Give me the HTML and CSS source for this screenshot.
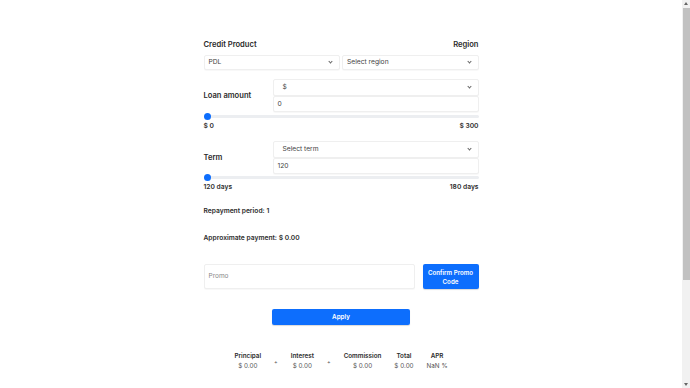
FILE: index.html
```html
<!DOCTYPE html>
<html lang="en">
<head>
    <meta charset="UTF-8">
    <meta name="viewport" content="width=device-width, initial-scale=1.0">
    <title>Loan calculator</title>
    <link rel="stylesheet" href="styles.css">
</head>
<body>
    <div class="calc">
        <div class="head-row">
            <span class="label">Credit Product</span>
            <span class="label">Region</span>
        </div>
        <div class="select-row">
            <div class="select">PDL<span class="caret"></span></div>
            <div class="select">Select region<span class="caret"></span></div>
        </div>

        <div class="field">
            <span class="label">Loan amount</span>
            <div class="field-inputs">
                <div class="select tall">$<span class="caret"></span></div>
                <div class="input">0</div>
            </div>
        </div>
        <div class="range"><span class="thumb"></span></div>
        <div class="range-labels">
            <span>$ 0</span>
            <span>$ 300</span>
        </div>

        <div class="field term">
            <span class="label">Term</span>
            <div class="field-inputs">
                <div class="select tall">Select term<span class="caret"></span></div>
                <div class="input">120</div>
            </div>
        </div>
        <div class="range term-range"><span class="thumb"></span></div>
        <div class="range-labels">
            <span>120 days</span>
            <span>180 days</span>
        </div>

        <p class="info">Repayment period: 1</p>
        <p class="info second">Approximate payment: $ 0.00</p>

        <div class="promo-row">
            <div class="promo">Promo</div>
            <button class="btn btn-promo">Confirm Promo<br>Code</button>
        </div>

        <div class="apply-row">
            <button class="btn btn-apply">Apply</button>
        </div>

        <div class="summary">
            <div class="sum-item"><b>Principal</b><span>$ 0.00</span></div>
            <div class="plus">+</div>
            <div class="sum-item"><b>Interest</b><span>$ 0.00</span></div>
            <div class="plus">+</div>
            <div class="sum-item"><b>Commission</b><span>$ 0.00</span></div>
            <div class="sum-item"><b>Total</b><span>$ 0.00</span></div>
            <div class="sum-item"><b>APR</b><span>NaN %</span></div>
        </div>
    </div>

    <!-- page scrollbar as it looks in the screenshot -->
    <div class="scrollbar">
        <span class="sb-arrow up"></span>
        <span class="sb-thumb"></span>
        <span class="sb-arrow down"></span>
    </div>
</body>
</html>
```

FILE: styles.css
```css
body {
    margin: 0;
    padding: 0 8px 0 0;
    font-family: Inter, "Noto Sans", sans-serif;
    color: #212529;
    background: #fff;
}

.scrollbar {
    position: fixed;
    top: 0;
    right: 0;
    width: 8px;
    height: 100vh;
    background: #f1f1f1;
    display: flex;
    flex-direction: column;
    align-items: center;
}

.sb-thumb {
    width: 7px;
    height: 272px;
    margin-left: 1px;
    background: #c1c1c1;
}

.sb-arrow {
    width: 0;
    height: 0;
    margin: 2px 0 3px;
    border-left: 2px solid transparent;
    border-right: 2px solid transparent;
}

.sb-arrow.up {
    border-bottom: 3px solid #666;
}

.sb-arrow.down {
    margin-top: auto;
    margin-bottom: 2px;
    border-top: 3px solid #666;
}

.calc {
    width: 275px;
    margin: 0 auto;
    padding: 40px 0 182px;
}

.label {
    font-size: 7.6px;
    font-weight: 600;
    color: #2b2b2b;
}

.head-row {
    display: flex;
    justify-content: space-between;
    height: 10px;
    line-height: 10px;
}

.select-row {
    display: flex;
    gap: 2px;
    margin-top: 5px;
}

.select,
.input,
.promo {
    box-sizing: border-box;
    position: relative;
    border: 1px solid #efefef;
    border-radius: 2px;
    background: #fff;
    box-shadow: 0 1px 1px rgba(0, 0, 0, 0.03);
    font-size: 6.7px;
    color: #444;
}

.select {
    flex: 1;
    height: 15px;
    line-height: 13px;
    padding-left: 4px;
}

.select.tall {
    height: 17px;
    line-height: 15px;
    padding-left: 9px;
}

.caret {
    position: absolute;
    right: 7px;
    top: 4px;
    width: 2px;
    height: 2px;
    border-right: 1px solid #666;
    border-bottom: 1px solid #666;
    transform: rotate(45deg);
}

.select.tall .caret {
    top: 5px;
}

.field {
    display: grid;
    grid-template-columns: 69px 1fr;
    align-items: center;
    margin-top: 9px;
}

.field.term {
    margin-top: 11px;
}

.field-inputs {
    display: flex;
    flex-direction: column;
}

.input {
    height: 16px;
    line-height: 14px;
    padding-left: 4px;
}

.range {
    position: relative;
    height: 3px;
    margin-top: 3px;
    background: #eceef1;
    border-radius: 2px;
}

.range.term-range {
    margin-top: 2px;
}

.thumb {
    position: absolute;
    left: 0;
    top: -2px;
    width: 7px;
    height: 7px;
    border-radius: 50%;
    background: #0d6efd;
}

.range-labels {
    display: flex;
    justify-content: space-between;
    height: 8px;
    line-height: 8px;
    font-size: 6.7px;
    font-weight: 600;
    color: #2b2b2b;
    margin-top: 4px;
}

.info {
    margin: 16px 0 0;
    height: 8px;
    line-height: 8px;
    font-size: 6.7px;
    font-weight: 600;
    color: #2b2b2b;
}

.info.second {
    margin-top: 19px;
}

.promo-row {
    display: flex;
    justify-content: space-between;
    align-items: center;
    margin-top: 22px;
}

.promo {
    width: 211px;
    height: 25px;
    line-height: 23px;
    padding-left: 4px;
    font-size: 6.5px;
    color: #888;
}

.btn {
    border: none;
    background: #0d6efd;
    color: #fff;
    font-family: Inter, "Noto Sans", sans-serif;
    font-weight: 600;
    border-radius: 2px;
    padding: 0;
    box-shadow: 0 1px 1px rgba(0, 0, 0, 0.15);
}

.btn-promo {
    width: 56px;
    height: 25px;
    font-size: 6.2px;
    line-height: 9px;
}

.apply-row {
    display: flex;
    justify-content: center;
    margin-top: 20px;
}

.btn-apply {
    width: 138px;
    height: 16px;
    font-size: 6.3px;
}

.summary {
    display: flex;
    justify-content: center;
    align-items: center;
    gap: 13px;
    margin-top: 27px;
}

.sum-item {
    display: flex;
    flex-direction: column;
    align-items: center;
    font-size: 6.3px;
    line-height: 9px;
}

.sum-item b {
    font-weight: 600;
    color: #2b2b2b;
}

.sum-item span {
    color: #555;
    margin-top: 1px;
}

.plus {
    font-size: 5.5px;
    color: #555;
}
```
